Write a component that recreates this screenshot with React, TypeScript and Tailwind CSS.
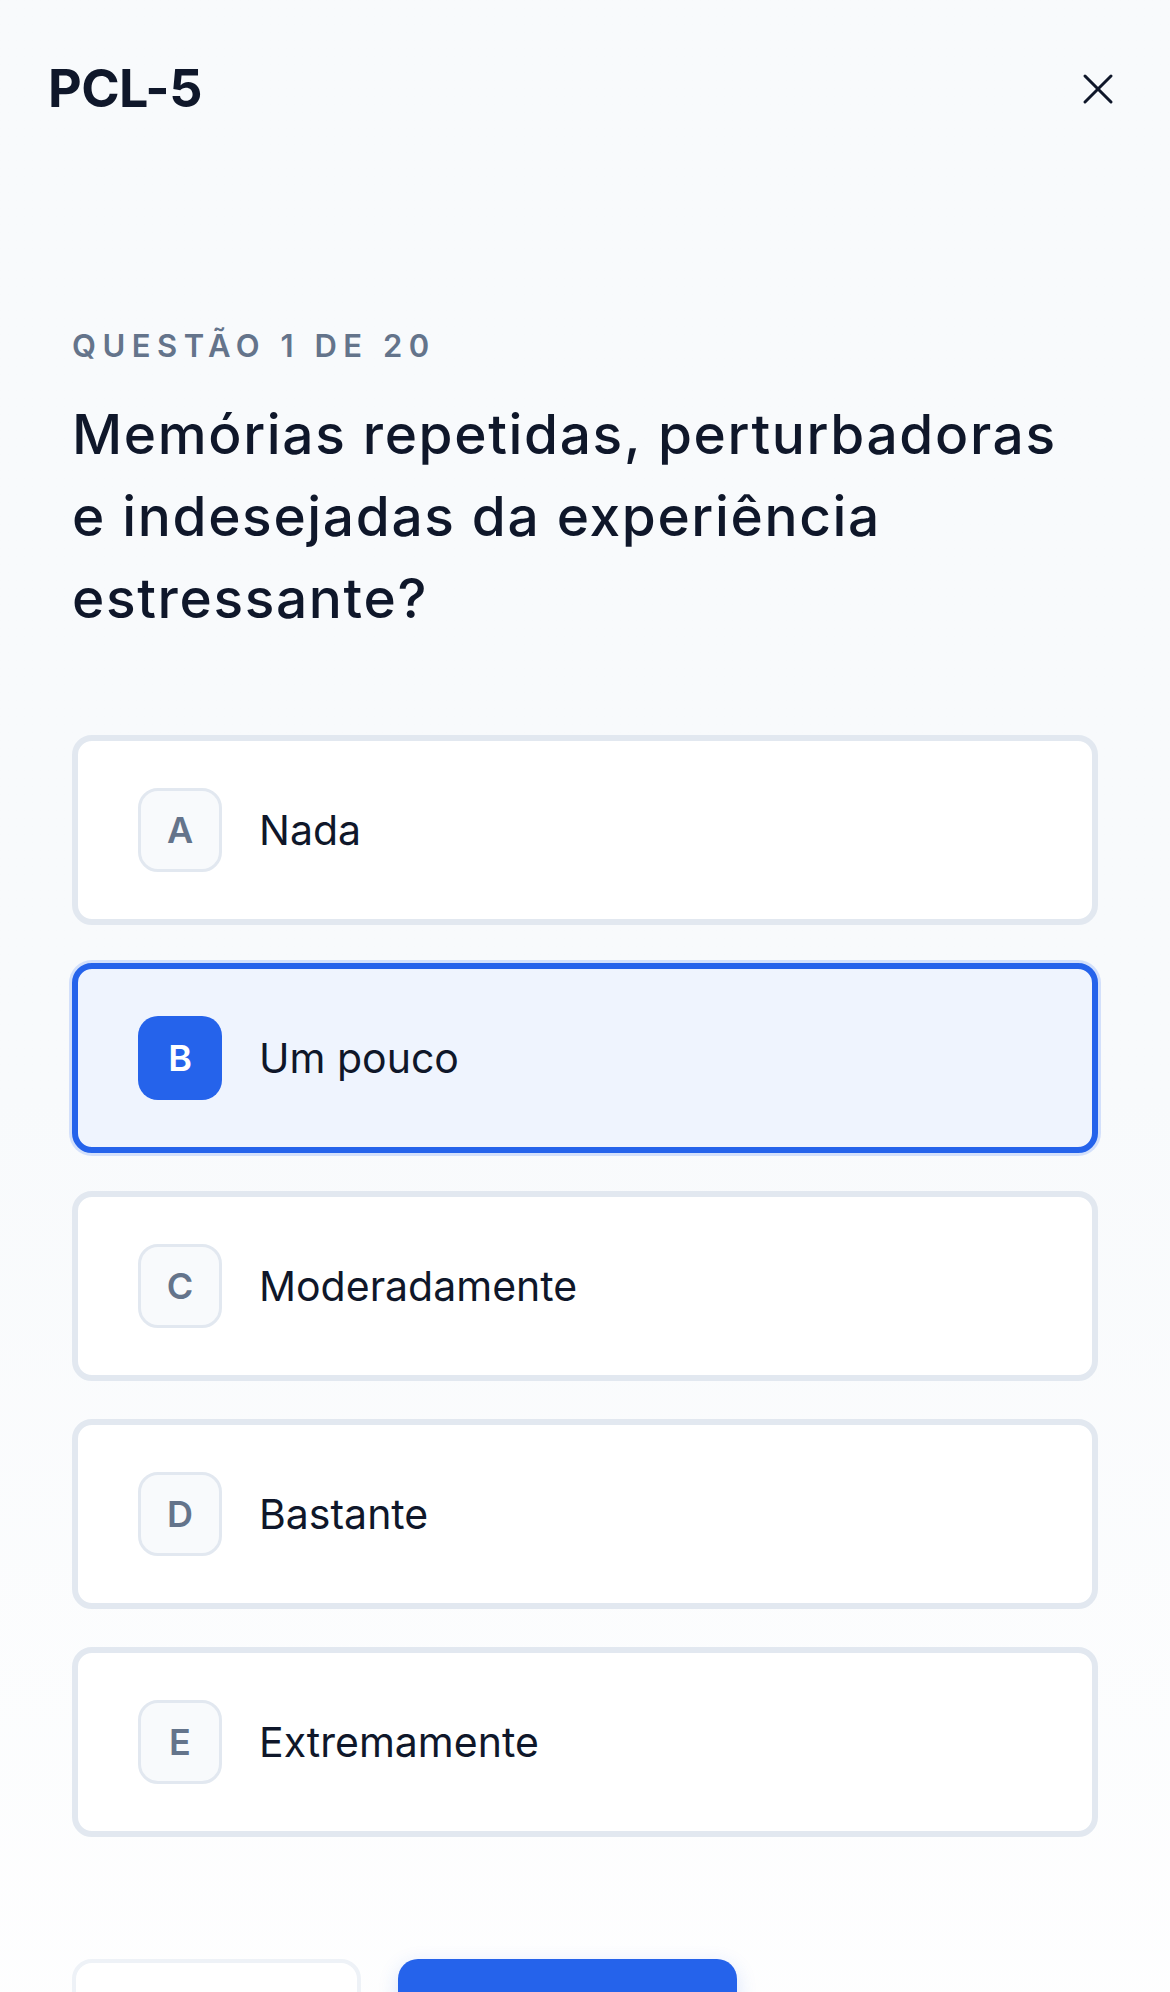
import { useState } from 'react';
import { X } from 'lucide-react';

const options = [
  { key: 'A', label: 'Nada' },
  { key: 'B', label: 'Um pouco' },
  { key: 'C', label: 'Moderadamente' },
  { key: 'D', label: 'Bastante' },
  { key: 'E', label: 'Extremamente' },
];

function OptionCard({
  letter,
  label,
  selected,
  onSelect,
}: {
  letter: string;
  label: string;
  selected: boolean;
  onSelect: () => void;
}) {
  return (
    <button
      onClick={onSelect}
      className={
        selected
          ? 'w-full flex items-center gap-[37px] px-[60px] py-[47px] rounded-[20px] border-[6px] border-[#2563eb] bg-[#eff4fe] ring-[3px] ring-[#d3e0fb] text-left'
          : 'w-full flex items-center gap-[37px] px-[60px] py-[47px] rounded-[20px] border-[6px] border-[#e2e8f0] bg-white text-left'
      }
    >
      <span
        className={
          selected
            ? 'w-[84px] h-[84px] shrink-0 rounded-[20px] bg-[#2563eb] text-white flex items-center justify-center text-[36px] font-semibold'
            : 'w-[84px] h-[84px] shrink-0 rounded-[20px] border-[3px] border-[#e2e8f0] bg-[#f8fafc] text-[#64748b] flex items-center justify-center text-[36px] font-semibold'
        }
      >
        {letter}
      </span>
      <span className="text-[41px] leading-[66px] text-[#0f172a]">{label}</span>
    </button>
  );
}

export default function App() {
  const [selected, setSelected] = useState('B');

  return (
    <div
      className="min-h-screen bg-gradient-to-b from-[#f8fafc] via-[#f8fafc] to-white"
      style={{ fontFamily: 'Inter, "Noto Sans", sans-serif' }}
    >
      {/* topo */}
      <header className="h-[178px] px-12 flex items-center justify-between">
        <h1 className="text-[52px] font-bold tracking-[-0.01em] text-[#0f172a]">PCL-5</h1>
        <button className="text-[#0f172a] -mr-[2px]">
          <X size={52} strokeWidth={1.4} />
        </button>
      </header>

      <main className="px-[72px] pt-[148px]">
        <div className="text-[31px] leading-[40px] font-semibold tracking-[0.21em] text-[#64748b]">
          QUESTÃO 1 DE 20
        </div>
        <h2 className="mt-[27px] max-w-[1000px] text-[55px] leading-[82px] font-medium tracking-[0.03em] text-[#0f172a]">
          Memórias repetidas, perturbadoras e indesejadas da experiência estressante?
        </h2>

        <div className="mt-[96px] flex flex-col gap-[38px]">
          {options.map((o) => (
            <OptionCard
              key={o.key}
              letter={o.key}
              label={o.label}
              selected={selected === o.key}
              onSelect={() => setSelected(o.key)}
            />
          ))}
        </div>

        {/* navegação */}
        <div className="mt-[122px] pb-12 flex gap-[37px]">
          <button className="w-[289px] h-[176px] rounded-[20px] border-[4px] border-[#eef2f7] bg-white text-[44px] leading-[52px] font-semibold text-[#334155]">
            Voltar
          </button>
          <button className="w-[339px] h-[176px] rounded-[20px] bg-[#2563eb] text-[44px] leading-[52px] font-semibold text-white shadow-[0_6px_20px_rgba(37,99,235,0.18)]">
            Próxima
          </button>
        </div>
      </main>
    </div>
  );
}
